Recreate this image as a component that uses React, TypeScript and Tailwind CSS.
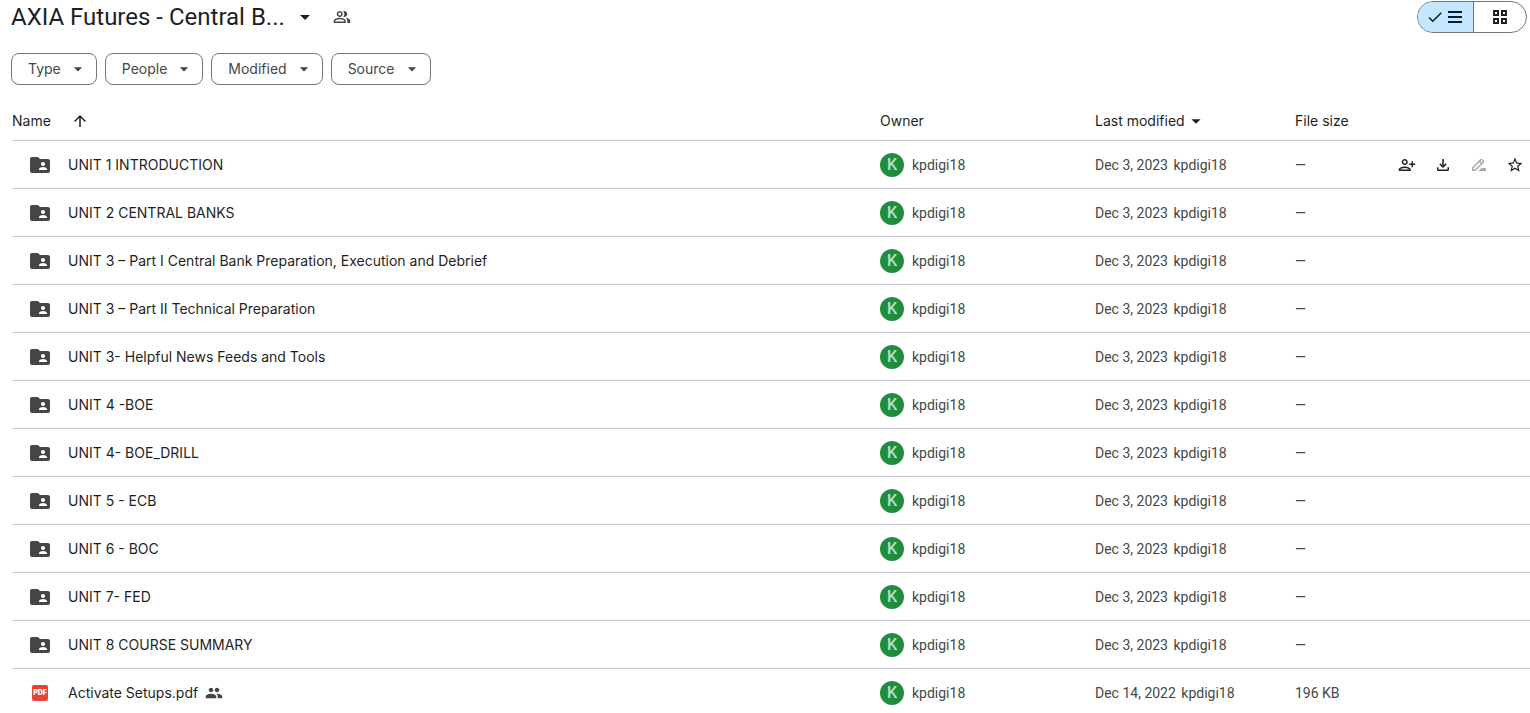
import {
  MdArrowDropDown,
  MdArrowUpward,
  MdCheck,
  MdFolderShared,
  MdOutlineFileDownload,
  MdOutlinePeopleAlt,
  MdPeople,
  MdPersonAddAlt,
  MdStarBorder,
} from "react-icons/md";

interface DriveItem {
  name: string;
  kind: "folder" | "pdf";
  modified: string;
  size: string;
}

const folders = [
  "UNIT 1 INTRODUCTION",
  "UNIT 2 CENTRAL BANKS",
  "UNIT 3 – Part I Central Bank Preparation, Execution and Debrief",
  "UNIT 3 – Part II Technical Preparation",
  "UNIT 3- Helpful News Feeds and Tools",
  "UNIT 4 -BOE",
  "UNIT 4- BOE_DRILL",
  "UNIT 5 - ECB",
  "UNIT 6 - BOC",
  "UNIT 7- FED",
  "UNIT 8 COURSE SUMMARY",
];

const items: DriveItem[] = [
  ...folders.map((name) => ({
    name,
    kind: "folder" as const,
    modified: "Dec 3, 2023",
    size: "—",
  })),
  {
    name: "Activate Setups.pdf",
    kind: "pdf",
    modified: "Dec 14, 2022",
    size: "196 KB",
  },
];

const filters = ["Type", "People", "Modified", "Source"];

function PdfIcon() {
  return (
    <span className="flex h-4 w-4 items-center justify-center rounded-xs bg-[#ea4335] text-[7px] font-black text-white">
      PDF
    </span>
  );
}

function ListIcon() {
  return (
    <svg width="14" height="12" viewBox="0 0 14 12" fill="currentColor">
      <path d="M0 0h14v2H0zM0 5h14v2H0zM0 10h14v2H0z" />
    </svg>
  );
}

function GridIcon() {
  return (
    <svg
      width="14"
      height="14"
      viewBox="0 0 14 14"
      fill="none"
      stroke="currentColor"
      strokeWidth="2"
    >
      <path d="M1 1h4v4H1zM9 1h4v4H9zM1 9h4v4H1zM9 9h4v4H9z" />
    </svg>
  );
}

function RenameIcon() {
  return (
    <svg width="18" height="18" viewBox="0 0 18 18" fill="none">
      <path
        d="M2.8 14.2v-2.4l8-8c.4-.4 1-.4 1.4 0l1 1c.4.4.4 1 0 1.4l-8 8zM9.4 5.2l2.4 2.4"
        stroke="currentColor"
        strokeWidth="1.5"
      />
      <path d="M8.5 15l3-3H16v3z" fill="currentColor" />
    </svg>
  );
}

function Header() {
  return (
    <header className="flex h-[33px] items-start justify-between pr-[3px] pt-px">
      <div className="flex h-8 items-center">
        <h1>
          <button className="flex items-center gap-2 text-2xl">
            AXIA Futures - Central B...
            <MdArrowDropDown size={24} />
          </button>
        </h1>
        <button aria-label="Manage access" className="ml-4 text-[#444746]">
          <MdOutlinePeopleAlt size={18} />
        </button>
      </div>
      <div className="flex h-8 w-[110px] overflow-hidden rounded-full border border-[#747775]">
        <button
          aria-label="List layout"
          aria-pressed="true"
          className="flex flex-1 items-center justify-center gap-1 border-r border-[#747775] bg-[#c2e7ff] pr-0.5 text-[#001d35]"
        >
          <MdCheck size={18} />
          <ListIcon />
        </button>
        <button
          aria-label="Grid layout"
          aria-pressed="false"
          className="flex flex-1 items-center justify-center"
        >
          <GridIcon />
        </button>
      </div>
    </header>
  );
}

function Filters() {
  return (
    <div className="mt-5 flex gap-2">
      {filters.map((filter) => (
        <button
          key={filter}
          aria-haspopup="menu"
          className="flex h-8 items-center gap-[7px] rounded-lg border border-[#747775] pl-4 pr-2 font-['Inter',sans-serif] text-sm text-[#444746]"
        >
          {filter}
          <MdArrowDropDown size={20} />
        </button>
      ))}
    </div>
  );
}

function RowActions() {
  return (
    <div className="flex items-center justify-end gap-[18px] pr-1.5 text-[#1f1f1f]">
      <button aria-label="Share">
        <MdPersonAddAlt size={18} />
      </button>
      <button aria-label="Download">
        <MdOutlineFileDownload size={18} />
      </button>
      <button aria-label="Rename" disabled className="text-[#a8a9a9]">
        <RenameIcon />
      </button>
      <button aria-label="Add to starred">
        <MdStarBorder size={18} />
      </button>
    </div>
  );
}

function ItemRow({ item, active }: { item: DriveItem; active: boolean }) {
  return (
    <tr className="h-12 text-[#444746] *:border-b *:border-[#c7c7c7]">
      <td className="p-0">
        <div className="flex items-center gap-4 pl-4 font-['Inter',sans-serif] text-[#1f1f1f]">
          <span className="flex w-6 shrink-0 justify-center text-[#444746]">
            {item.kind === "folder" ? <MdFolderShared size={24} /> : <PdfIcon />}
          </span>
          <span className="flex items-center gap-[7px] truncate">
            {item.name}
            {item.kind === "pdf" && (
              <MdPeople size={18} className="text-[#444746]" />
            )}
          </span>
        </div>
      </td>
      <td className="p-0">
        <div className="flex items-center gap-2">
          <span className="flex h-6 w-6 items-center justify-center rounded-full bg-[#1e8e3e] text-base font-medium text-[#bbdfc4]">
            K
          </span>
          kpdigi18
        </div>
      </td>
      <td className="p-0">
        {item.modified} <span className="ml-0.5">kpdigi18</span>
      </td>
      <td className="p-0">{item.size}</td>
      <td className="p-0">{active && <RowActions />}</td>
    </tr>
  );
}

export default function App() {
  return (
    <main className="h-screen overflow-hidden bg-white pl-[11px] font-['Roboto',sans-serif] text-sm text-[#1f1f1f]">
      <Header />
      <Filters />
      <div className="mt-4 pl-px">
        <table className="w-full table-fixed border-separate border-spacing-0 text-left">
          <thead className="font-['Inter',sans-serif]">
            <tr className="h-10 *:border-b *:border-[#c7c7c7]">
              <th className="p-0 font-normal">
                <button className="flex items-center gap-5">
                  Name
                  <MdArrowUpward size={18} />
                </button>
              </th>
              <th className="w-[215px] p-0 font-normal">Owner</th>
              <th className="w-[200px] p-0 font-normal">
                <button className="flex items-center">
                  Last modified
                  <MdArrowDropDown size={22} />
                </button>
              </th>
              <th className="w-[85px] p-0 font-normal">File size</th>
              <th aria-label="Actions" className="w-[150px] p-0" />
            </tr>
          </thead>
          <tbody>
            {items.map((item, index) => (
              <ItemRow key={item.name} item={item} active={index === 0} />
            ))}
          </tbody>
        </table>
      </div>
    </main>
  );
}
